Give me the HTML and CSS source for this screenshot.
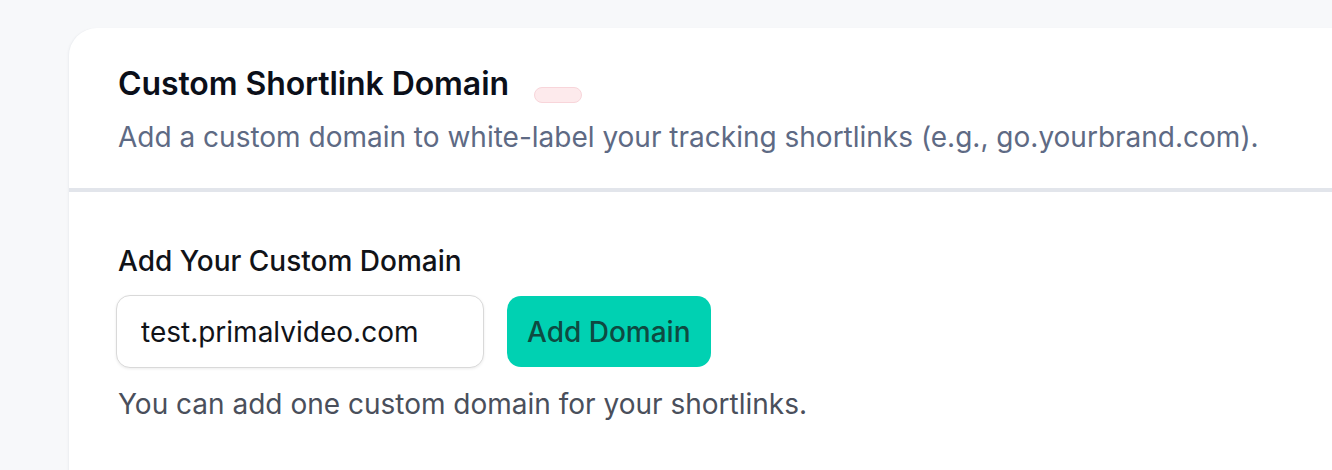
FILE: index.html
```html
<!DOCTYPE html>
<html lang="en">
<head>
<meta charset="utf-8">
<title>Custom Shortlink Domain</title>
<link rel="stylesheet" href="styles.css">
</head>
<body>
<main class="page">
  <section class="card">
    <header class="card-header">
      <div class="title-row">
        <h2 class="title">Custom Shortlink Domain</h2>
        <span class="badge"></span>
      </div>
      <p class="subtitle">Add a custom domain to white-label your tracking shortlinks (e.g., go.yourbrand.com).</p>
    </header>
    <div class="card-body">
      <label class="field-label" for="domain">Add Your Custom Domain</label>
      <div class="field-row">
        <input id="domain" class="input" type="text" value="test.primalvideo.com">
        <button class="btn" type="button">Add Domain</button>
      </div>
      <p class="help">You can add one custom domain for your shortlinks.</p>
    </div>
  </section>
</main>
</body>
</html>
```

FILE: styles.css
```css
* { box-sizing: border-box; }
html, body {
  margin: 0;
  padding: 0;
  background: #f7f8fa;
  font-family: Inter, "Noto Sans", sans-serif;
  overflow: hidden;
  height: 470px;
}
.page {
  padding: 28px 0 0 69px;
}
.card {
  width: 1320px;
  height: 460px;
  background: #ffffff;
  border-top-left-radius: 28px;
  box-shadow: -1px 0 0 #eef0f3, -2px 0 2px rgba(0,0,0,0.02);
}
.card-header {
  padding: 36px 49px 31px;
  border-bottom: 4px solid #e2e5eb;
}
.title-row {
  display: flex;
  align-items: flex-start;
  gap: 25px;
}
.title {
  margin: 0;
  font-size: 32px;
  line-height: 40px;
  font-weight: 600;
  letter-spacing: -0.09px;
  color: #0b0f19;
}
.badge {
  width: 48px;
  height: 16px;
  margin-top: 23px;
  border-radius: 8px;
  background: #fdeaec;
  border: 1.5px solid #f8d5da;
}
.subtitle {
  margin: 13px 0 0;
  font-size: 28px;
  line-height: 40px;
  color: #5e6a84;
}
.card-body {
  padding: 49px 47px 0;
}
.field-label {
  display: block;
  margin-left: 2px;
  font-size: 28px;
  line-height: 40px;
  font-weight: 500;
  color: #111318;
}
.field-row {
  display: flex;
  align-items: center;
  gap: 23px;
  margin-top: 14px;
}
.input {
  width: 368px;
  height: 73px;
  padding: 0 24px;
  border: 1.5px solid #d9d9d9;
  border-radius: 14px;
  box-shadow: 0 1px 3px rgba(0,0,0,0.08);
  font-family: inherit;
  font-size: 28px;
  color: #111318;
  background: #fff;
  outline: none;
}
.btn {
  height: 71px;
  padding: 0 20px;
  border: none;
  border-radius: 14px;
  background: #00d1b2;
  color: #0e4a41;
  font-family: inherit;
  font-size: 28px;
  font-weight: 500;
}
.help {
  margin: 16px 0 0 2px;
  font-size: 28px;
  line-height: 40px;
  color: #4a4f5b;
}
```
